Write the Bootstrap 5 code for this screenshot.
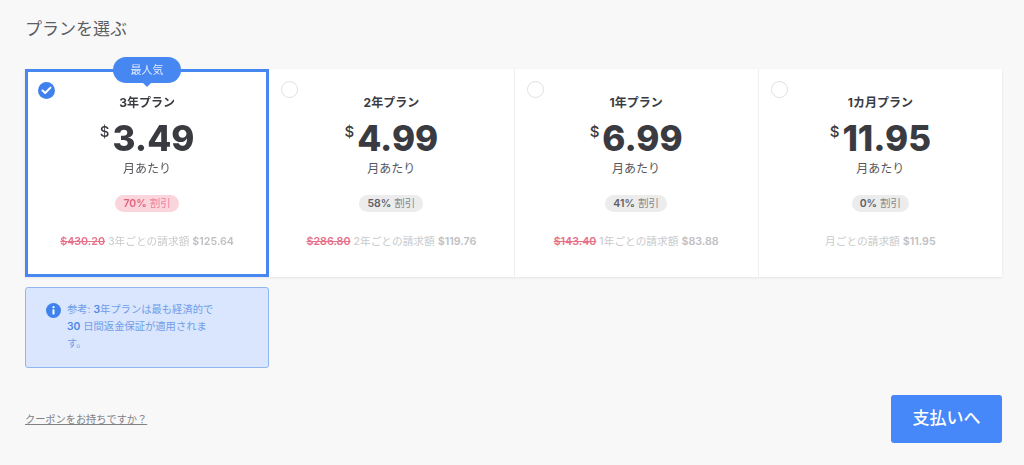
<!DOCTYPE html>
<html lang="ja">
<head>
<meta charset="utf-8">
<title>プランを選ぶ</title>
<link href="https://cdn.jsdelivr.net/npm/bootstrap@5.3.0/dist/css/bootstrap.min.css" rel="stylesheet">
<style>
html,body{height:465px;overflow:hidden}
body{background:#f8f8f9;font-family:Inter,"Noto Sans CJK JP",sans-serif;color:#3a3c42}
.page-wrap{padding:19px 22px 0 25px}
.page-title{font-size:17px;font-weight:400;line-height:21px;color:#5b5d62;margin:0 0 29px}
.plan-row{filter:drop-shadow(0 1px 1px rgba(0,0,0,.08))}
.plan-box{position:relative;height:208px;background:#fff;border-left:1px solid #eeeff1;text-align:center;padding-top:26px}
.plan-box.is-picked{border:3px solid #4687f2;padding-top:23px;z-index:1}
.plan-name{font-size:12px;font-weight:700;line-height:16px;color:#3a3c42}
.price-line{display:flex;justify-content:center;align-items:flex-start;margin-top:6px;height:42px}
.price-cur{font-size:15px;font-weight:500;line-height:15px;margin-top:7px;margin-right:3px;color:#3a3c42}
.price-num{font-size:35px;font-weight:800;line-height:42px;color:#393b41}
.per-month{font-size:12px;line-height:16px;color:#56585d;margin-top:2px}
.off-pill{display:inline-block;margin-top:18px;font-size:10.5px;line-height:17px;height:17px;padding:0 8px;border-radius:9px;background:#ececed;color:#85878b;vertical-align:top}
.off-pill b{font-weight:600;color:#5e6065}
.off-pill.is-hot{background:#fbd5dc;color:#ee7f95}
.off-pill.is-hot b{color:#e2617c}
.bill-line{font-size:10.7px;line-height:14px;margin-top:23px;color:#c9cacc;white-space:nowrap}
.bill-line s{color:#e8718a;font-weight:600}
.bill-line b{font-weight:600;color:#bfc0c3}
.pick-dot{position:absolute;left:12px;top:12px;width:17px;height:17px;border-radius:50%;border:1px solid #dfe0e2;background:#fff}
.plan-box.is-picked .pick-dot{left:10px;top:10px;border:0;background:#4082ed;display:flex;align-items:center;justify-content:center}
.fav-tag{position:absolute;left:85px;top:-15px;width:68px;height:26px;border-radius:13px;background:#4687f2;color:#dfeaff;font-size:11px;line-height:26px}
.fav-tag::after{content:"";position:absolute;left:29px;bottom:-4px;border-style:solid;border-width:5px 5px 0;border-color:#4687f2 transparent transparent}
.note-box{width:244px;height:81px;margin-top:10px;background:#d9e6fd;border:1px solid #8fb6ee;border-radius:3px;padding:13px 20px;display:flex;gap:6px;font-size:10.3px;line-height:17px;color:#6f9de8}
.note-box b{font-weight:600;color:#4f86e6}
.note-txt{white-space:nowrap}
.note-ico{flex:none;margin-top:2px}
.foot-row{margin-top:27px}
.coupon-link{font-size:10.2px;line-height:14px;color:#808286;text-decoration:underline;margin-top:17px}
.pay-btn{width:111px;height:48px;background:#4687f9;border:0;border-radius:3px;color:#fff;font-size:17px;font-weight:500;padding:0;font-family:inherit}
.pay-btn:hover{background:#4687f9;color:#fff}
</style>
</head>
<body>
<div class="page-wrap">
  <h1 class="page-title">プランを選ぶ</h1>
  <div class="row g-0 plan-row">
    <div class="col-3">
      <div class="plan-box is-picked">
        <div class="fav-tag">最人気</div>
        <div class="pick-dot"><svg width="11" height="9" viewBox="0 0 11 9"><path d="M1.5 4.5 4.2 7 9.5 1.6" fill="none" stroke="#fff" stroke-width="2" stroke-linecap="round" stroke-linejoin="round"/></svg></div>
        <div class="plan-name">3年プラン</div>
        <div class="price-line"><span class="price-cur">$</span><span class="price-num">3.49</span></div>
        <div class="per-month">月あたり</div>
        <div class="off-pill is-hot"><b>70%</b> 割引</div>
        <div class="bill-line"><s>$430.20</s> 3年ごとの請求額 <b>$125.64</b></div>
      </div>
    </div>
    <div class="col-3">
      <div class="plan-box border-start-0">
        <div class="pick-dot"></div>
        <div class="plan-name">2年プラン</div>
        <div class="price-line"><span class="price-cur">$</span><span class="price-num">4.99</span></div>
        <div class="per-month">月あたり</div>
        <div class="off-pill"><b>58%</b> 割引</div>
        <div class="bill-line"><s>$286.80</s> 2年ごとの請求額 <b>$119.76</b></div>
      </div>
    </div>
    <div class="col-3">
      <div class="plan-box">
        <div class="pick-dot"></div>
        <div class="plan-name">1年プラン</div>
        <div class="price-line"><span class="price-cur">$</span><span class="price-num">6.99</span></div>
        <div class="per-month">月あたり</div>
        <div class="off-pill"><b>41%</b> 割引</div>
        <div class="bill-line"><s>$143.40</s> 1年ごとの請求額 <b>$83.88</b></div>
      </div>
    </div>
    <div class="col-3">
      <div class="plan-box">
        <div class="pick-dot"></div>
        <div class="plan-name">1カ月プラン</div>
        <div class="price-line"><span class="price-cur">$</span><span class="price-num">11.95</span></div>
        <div class="per-month">月あたり</div>
        <div class="off-pill"><b>0%</b> 割引</div>
        <div class="bill-line">月ごとの請求額 <b>$11.95</b></div>
      </div>
    </div>
  </div>
  <div class="note-box">
    <svg class="note-ico" width="15" height="15" viewBox="0 0 15 15"><circle cx="7.5" cy="7.5" r="7.5" fill="#4082ed"/><circle cx="7.5" cy="4.2" r="1.1" fill="#fff"/><rect x="6.5" y="6.2" width="2" height="5.2" rx=".6" fill="#fff"/></svg>
    <div class="note-txt">参考: <b>3</b>年プランは最も経済的で<br><b>30</b> 日間返金保証が適用されま<br>す。</div>
  </div>
  <div class="d-flex justify-content-between align-items-start foot-row">
    <a href="#" class="coupon-link">クーポンをお持ちですか？</a>
    <button type="button" class="btn pay-btn">支払いへ</button>
  </div>
</div>
</body>
</html>
